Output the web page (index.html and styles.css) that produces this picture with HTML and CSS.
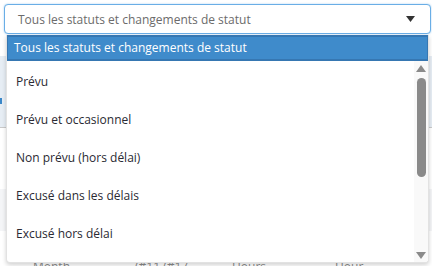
FILE: index.html
```html
<!DOCTYPE html>
<html lang="fr">
<head>
<meta charset="utf-8">
<title>Statuts</title>
<link rel="stylesheet" href="styles.css">
</head>
<body>
<div class="page">
  <div class="select">
    <span class="select-text">Tous les statuts et changements de statut</span>
    <svg class="caret" width="9" height="6" viewBox="0 0 9 6"><path d="M0 0H9L4.5 6Z" fill="#333"/></svg>
  </div>
  <div class="panel-blue"><span class="mark"></span></div>
  <div class="gap1"></div>
  <div class="panel-gray"></div>
  <div class="gap2"></div>
  <div class="table-row">
    <span class="c1">Month</span>
    <span class="c2">(#11 (#17</span>
    <span class="c3">Hours</span>
    <span class="c4">Hour</span>
  </div>

  <div class="listbox">
    <div class="current">Tous les statuts et changements de statut</div>
    <div class="scroll">
      <ul class="options">
        <li>Prévu</li>
        <li>Prévu et occasionnel</li>
        <li>Non prévu (hors délai)</li>
        <li>Excusé dans les délais</li>
        <li>Excusé hors délai</li>
        <li>Absent</li>
      </ul>
      <div class="scrollbar">
        <svg class="arrow" width="10" height="7" viewBox="0 0 10 7"><path d="M0 7L5 0L10 7Z" fill="#8a8a8a"/></svg>
        <div class="thumb"></div>
        <div class="track-rest"></div>
        <svg class="arrow" width="10" height="7" viewBox="0 0 10 7"><path d="M0 0H10L5 7Z" fill="#8a8a8a"/></svg>
      </div>
    </div>
  </div>
</div>
</body>
</html>
```
FILE: styles.css
```css
* { box-sizing: border-box; }
html, body { margin: 0; padding: 0; }
body {
  width: 432px;
  height: 266px;
  overflow: hidden;
  background: #fff;
  font-family: "Open Sans", "DejaVu Sans", sans-serif;
  font-size: 12px;
}
.page {
  position: relative;
  height: 266px;
  padding-top: 4px;
}
.select {
  margin: 0 1px 0 4px;
  height: 30px;
  border: 1px solid #6aaee6;
  border-radius: 4px;
  box-shadow: 0 0 2px rgba(102, 175, 233, 0.6);
  background: #fff;
  display: flex;
  align-items: center;
  padding: 0 15px 0 13px;
  color: #6b6b6b;
}
.select-text { flex: 1; }
.caret { display: block; }

.panel-blue {
  margin-top: 22px;
  height: 72px;
  background: #e6edf4;
  border-bottom: 1px solid #c9c9c9;
  position: relative;
}
.mark {
  position: absolute;
  left: 0;
  top: 42px;
  width: 2px;
  height: 6px;
  background: #3a87c8;
}
.gap1 { height: 61px; }
.panel-gray { height: 42px; background: #f4f5f7; }
.gap2 { height: 29px; }
.table-row {
  display: flex;
  color: #8a8a8a;
  font-size: 12px;
  line-height: 14px;
}
.table-row .c1 { margin-left: 33px; width: 102px; }
.table-row .c2 { width: 97px; }
.table-row .c3 { width: 103px; }

.listbox {
  position: absolute;
  left: 6px;
  top: 35px;
  width: 423px;
  height: 228px;
  background: #fff;
  border: 1px solid #e2e2e2;
  border-top: none;
  border-radius: 0 0 4px 4px;
  box-shadow: 0 2px 4px rgba(0, 0, 0, 0.18);
  display: flex;
  flex-direction: column;
  overflow: hidden;
}
.current {
  height: 26px;
  flex: none;
  background: #3f8bcb;
  border: 2px solid #3677b2;
  color: #fff;
  padding-left: 6px;
  line-height: 22px;
  margin: 0 -1px;
}
.scroll {
  flex: 1;
  display: flex;
  min-height: 0;
}
.options {
  list-style: none;
  margin: 0;
  padding: 2px 0 0;
  flex: 1;
  overflow: hidden;
  color: #2a2a33;
}
.options li {
  height: 38px;
  line-height: 38px;
  padding-left: 9px;
}
.scrollbar {
  width: 14px;
  flex: none;
  background: #f9f9f9;
  display: flex;
  flex-direction: column;
  align-items: center;
  padding: 4px 0 3px;
}
.arrow { display: block; flex: none; }
.thumb {
  margin-top: 6px;
  width: 9px;
  height: 99px;
  border-radius: 5px;
  background: #8a8a8a;
  flex: none;
}
.track-rest { flex: 1; }
```
